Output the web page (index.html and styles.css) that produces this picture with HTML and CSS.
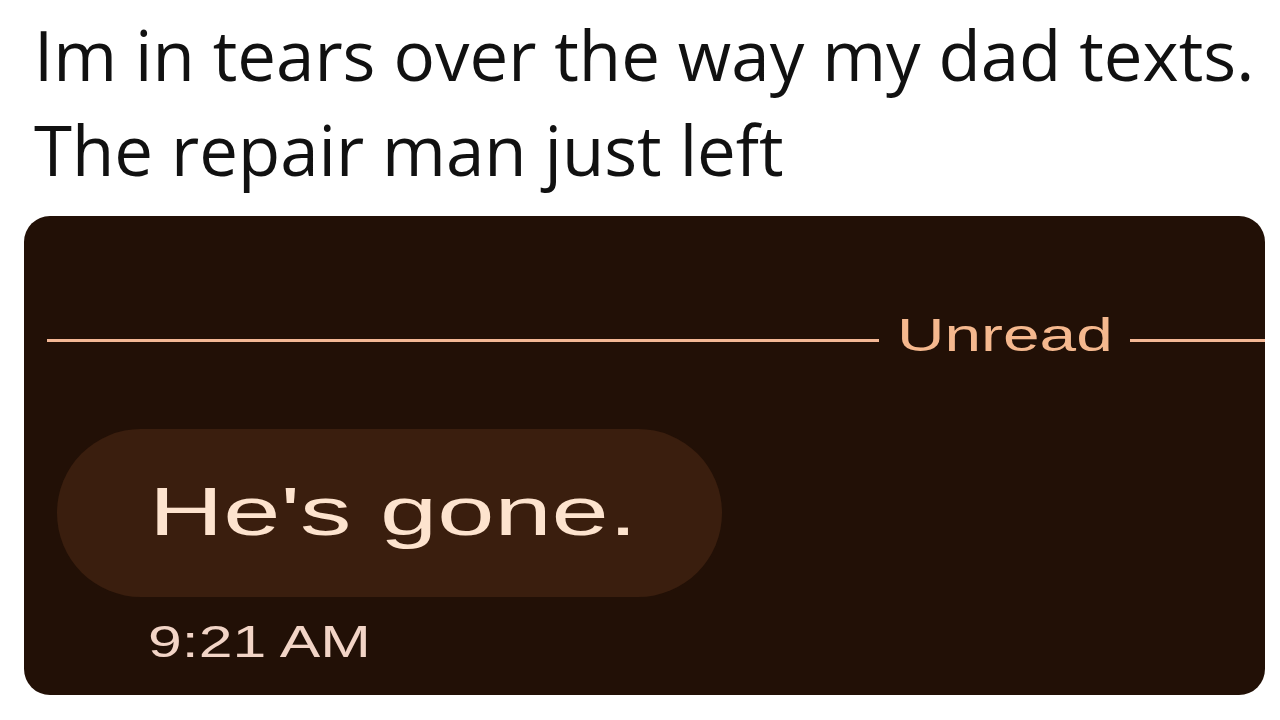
FILE: index.html
```html
<!DOCTYPE html>
<html>
<head>
<meta charset="utf-8">
<link rel="stylesheet" href="styles.css">
</head>
<body>
<div class="post">
  <p class="caption"><span class="caption-line">Im in tears over the way my dad texts.</span><span class="caption-line">The repair man just left</span></p>
  <div class="card">
    <div class="divider">
      <span class="rule rule-left"></span>
      <span class="label"><span class="stretch label-text">Unread</span></span>
      <span class="rule rule-right"></span>
    </div>
    <div class="bubble"><span class="stretch bubble-text">He's gone.</span></div>
    <div class="time"><span class="stretch time-text">9:21 AM</span></div>
  </div>
</div>
</body>
</html>
```
FILE: styles.css
```css
html, body {
  margin: 0;
  padding: 0;
  background: #ffffff;
}
body {
  width: 1280px;
  height: 720px;
  overflow: hidden;
}
.post {
  display: flex;
  flex-direction: column;
  padding: 0 15px 0 24px;
}
.caption {
  margin: 0;
  padding: 7px 0 0 10px;
  font-family: "Open Sans", "Liberation Sans", sans-serif;
  font-size: 69px;
  line-height: 95px;
  color: #111111;
  display: flex;
  flex-direction: column;
}
.caption-line {
  display: block;
  white-space: nowrap;
}
.stretch {
  display: inline-block;
  white-space: nowrap;
  transform-origin: left center;
  font-family: "Liberation Sans", Arial, sans-serif;
}
.card {
  margin-top: 19px;
  height: 479px;
  background: #221006;
  border-radius: 26px;
  display: flex;
  flex-direction: column;
}
.divider {
  display: flex;
  align-items: center;
  margin-top: 99px;
  padding-left: 23px;
  height: 50px;
}
.rule {
  height: 3px;
  background: #f4b795;
}
.rule-left {
  flex: 1;
}
.rule-right {
  width: 135px;
}
.label {
  width: 216px;
  padding: 0 17px 0 18px;
  line-height: 50px;
}
.label-text {
  font-size: 46px;
  color: #f5b88e;
  transform: scaleX(1.43);
}
.bubble {
  margin: 64px 0 0 33px;
  width: 665px;
  height: 168px;
  box-sizing: border-box;
  border-radius: 84px;
  background: #3a1e0e;
  display: flex;
  align-items: center;
  padding-left: 92px;
}
.bubble-text {
  font-size: 69px;
  color: #fde3ce;
  transform: scaleX(1.49);
  margin-top: -4px;
}
.time {
  margin: 22px 0 0 124px;
  line-height: 46px;
}
.time-text {
  font-size: 44px;
  color: #f2d4c6;
  transform: scaleX(1.38);
}
```
